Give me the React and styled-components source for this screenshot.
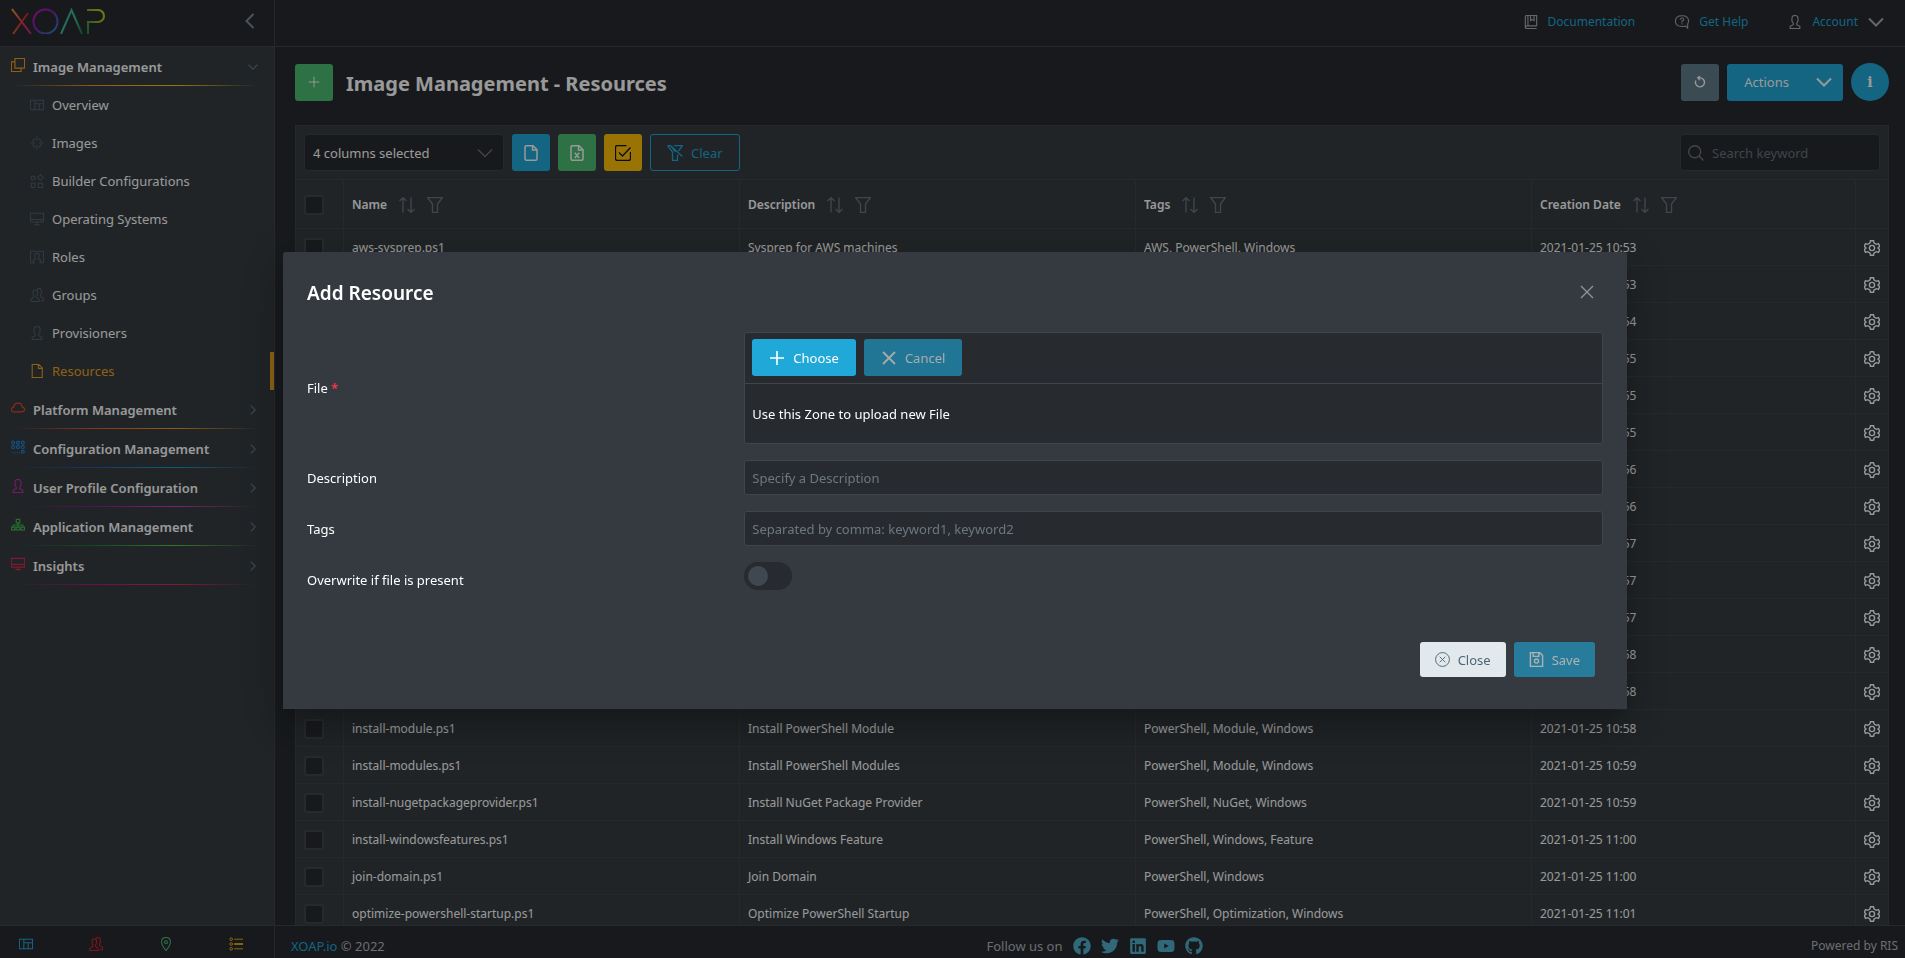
import styled, { createGlobalStyle } from "styled-components";
import { FaFacebook, FaGithub, FaLinkedin, FaTwitter, FaYoutube } from "react-icons/fa";

const colors = {
    page: "#272b30",
    panel: "#363c41",
    dialog: "#343a40",
    line: "#3f454a",
    blue: "#20a8d8",
    green: "#4dbd74",
    yellow: "#ffc107",
    muted: "#6b747c",
};

/* Drawings on a 16 unit grid, one unit stroke */
const drawings = {
    layers: <path d="M4.5.5h11v11h-11zM4.5 4.5h-4v11h11v-4" />,
    overview: <path d="M.5 2.5h15v11H.5zM5.5 2.5v11M5.5 6.5h10M10.5 6.5v7" />,
    target: (
        <path d="M8 .5v5M8 10.5v5M.5 8h5M10.5 8h5M3.5 6.5v-1l2-2h1M9.5 3.5h1l2 2v1M12.5 9.5v1l-2 2h-1M6.5 12.5h-1l-2-2v-1" />
    ),
    blocks: <path d="M1.5 2.5h4v4h-4zM1.5 10.5h4v5h-4zM9.5 10.5h5v5h-5zM12 .8l3.2 3.2L12 7.2 8.8 4z" />,
    monitor: <path d="M.5 1.5h15v10H.5zM.5 8.5h15M12 10h1M8 11.5v3M5 14.5h6" />,
    role: <path d="M3.5 14.5h-3v-13h15v13h-3M3.5 14.5l.5-3 2.5-1.5L5.5 8V6q0-2.5 2.5-2.5T10.5 6v2l-1 2 2.5 1.5.5 3M2.5 14.5h3M10.5 14.5h3" />,
    group: (
        <path d="M1 15.5h9.5V13l-3-2.500V9l1-2V4.500Q8.500 2 6 2T3.500 4.500V7l1 2v1.500L1 13zM8 1.500Q9 .5 10.500.5 13 .5 13 3.500V6l-1 2v1.500l3.500 2.500v2.500H12" />
    ),
    user: <path d="M2.500 15.500V13L6 11V9.500L4.500 7V4Q4.500.5 8 .5T11.500 4v3L10 9.500V11l3.500 2v2.500z" />,
    page: <path d="M2.500.5h7.500L14 4.500v11H2.500zM9.500.5V5H14" />,
    file: <path d="M3.500.7H10L14 4.700v9.100q0 1.500-1.500 1.500h-9Q2 15.300 2 13.800V2.200Q2 .7 3.500.7zM9.500.7V5H14" />,
    excel: (
        <path d="M3.500.7H10L14 4.700v9.100q0 1.500-1.500 1.500h-9Q2 15.300 2 13.800V2.200Q2 .7 3.500.7zM9.500.7V5H14M5.800 7.800l4.400 5.200M10.200 7.800L5.800 13" />
    ),
    cloud: <path d="M3.500 12.500Q.5 12.500.5 9.700.5 7.300 3.200 7 3.500 2.500 8 2.500T12.800 7Q15.500 7.300 15.500 9.700t-3 2.800z" />,
    grid: (
        <>
            <path d="M1 14.500h1M4 14.500h1M7 14.500h1M9.500 14.500h1" />
            {[2.5, 8, 13.5].map((x) => [3, 8].map((y) => <circle key={`${x}-${y}`} cx={x} cy={y} r="1.700" />))}
            <circle cx="13.500" cy="13.500" r="1.700" />
        </>
    ),
    tree: <path d="M6 1.500h4v4H6zM.5 10.500h4v3h-4zM6 10.500h4v3H6zM11.500 10.500h4v3h-4zM8 5.500v5M2.500 10.500V8h11v2.500" />,
    pin: (
        <>
            <path d="M8 15.500Q3 9.500 3 5.700 3 .5 8 .5t5 5.200Q13 9.500 8 15.500z" />
            <circle cx="8" cy="6" r="1.700" />
        </>
    ),
    list: (
        <>
            <path d="M6 2.500h10M6 7.500h10M6 8.500h10M6 13.500h10" />
            <circle cx="2.500" cy="2.500" r="1.500" />
            <circle cx="2.500" cy="8" r="1.500" />
            <circle cx="2.500" cy="13.500" r="1.500" />
        </>
    ),
    book: <path d="M14.500 12.500H3.500q-2 0-2 1.500t2 1.500h11M1.500 14V2.500q0-2 2-2h11v12M4.500.5v12M7.500.5v6l2-1.500 2 1.500v-6" />,
    help: (
        <path d="M12 12.500l2.500 2.500V10Q15.500 8.500 15.500 7 15.500.8 8 .8T.5 7 8 13.200q1.500 0 4-.7zM6 5.500q0-2 2-2t2 1.700Q10 6.500 8 7v1.500M8 9.500v1.300" />
    ),
    reload: <path d="M2.500 6a6 6 0 1 0 5.500-3.500H4.500M8 0L5 2.500l3 3" />,
    search: (
        <>
            <circle cx="6.700" cy="6.700" r="6" />
            <path d="M11 11l4.500 4.500" />
        </>
    ),
    check: <path d="M11.500.5h-9q-2 0-2 2v11q0 2 2 2h11q2 0 2-2V7M4 7.500L7.500 11l8-8.500" />,
    sort: <path d="M4 15.500V1M.5 4L4 .7 7.500 4M12 .5V15M8.500 12l3.500 3.300 3.500-3.300" />,
    filter: <path d="M.5.5h15L10.500 7v8.500h-5V7z" />,
    filterOff: <path d="M7 .6h8.400L11.500 6M.6.6L5.500 7v8.400h5V9.500M.6.6h3L15.400 11.500M3.600.6L8.500 7" />,
    gear: (
        <>
            <path d="M6.500.8h3l.6 2.200 2.300 1.300 2.100-.6 1.200 2.500L14 8l1.700 1.800-1.200 2.500-2.100-.6-2.300 1.300-.6 2.200h-3l-.6-2.200-2.300-1.300-2.100.6L.3 9.800 2 8 .3 6.200l1.200-2.500 2.100.6L5.900 3z" />
            <circle cx="8" cy="8" r="2.600" />
        </>
    ),
    plus: <path d="M8 1v14M1 8h14" />,
    cross: <path d="M2 2l12 12M14 2L2 14" />,
    crossCircle: (
        <>
            <circle cx="8" cy="8" r="7.400" />
            <path d="M5 5l6 6M11 5l-6 6" />
        </>
    ),
    save: (
        <>
            <path d="M1.500.7h10l3 3v11.600h-13zM4.500.7v4h6v-4" />
            <circle cx="8" cy="9.700" r="2.200" />
        </>
    ),
    chevronDown: <path d="M1 4.500l7 7 7-7" />,
    chevronRight: <path d="M4.500 1l7 7-7 7" />,
    chevronLeft: <path d="M11.500 1l-7 7 7 7" />,
};

const Icon = ({ name, size = 14, weight = 1 }) => (
    <Drawing
        viewBox="0 0 16 16"
        width={size}
        height={size}
        strokeWidth={weight}
        aria-hidden="true"
    >
        {drawings[name]}
    </Drawing>
);

const menu = [
    {
        title: "Image Management",
        icon: "layers",
        color: "#f39a1f",
        line: ["#f39a1f", "#f5cc1b"],
        items: [
            ["Overview", "overview"],
            ["Images", "target"],
            ["Builder Configurations", "blocks"],
            ["Operating Systems", "monitor"],
            ["Roles", "role"],
            ["Groups", "group"],
            ["Provisioners", "user"],
            ["Resources", "page"],
        ],
    },
    { title: "Platform Management", icon: "cloud", color: "#e8472b", line: ["#e8572b", "#f39a1f"] },
    { title: "Configuration Management", icon: "grid", color: "#1f8be0", line: ["#2b57b5", "#1c9ad6"] },
    { title: "User Profile Configuration", icon: "user", color: "#c42bb8", line: ["#8a1f8f", "#d13bb4"] },
    { title: "Application Management", icon: "tree", color: "#43b649", line: ["#23793a", "#5fc34a"] },
    { title: "Insights", icon: "monitor", color: "#d8284f", line: ["#b01d7c", "#e02b50"] },
];

const rows = [
    ["aws-sysprep.ps1", "Sysprep for AWS machines", "AWS, PowerShell, Windows", "10:53"],
    ["azure-sysprep.ps1", "Sysprep for Azure machines", "Azure, PowerShell", "10:53"],
    ["cleanup.ps1", "Cleanup", "PowerShell, Windows", "10:54"],
    ["configure-winrm.ps1", "Configure WinRM", "PowerShell, Windows", "10:55"],
    ["debloat.ps1", "Debloat Windows", "PowerShell, Windows", "10:55"],
    ["defrag.ps1", "Defrag Disk", "PowerShell, Windows", "10:55"],
    ["disable-uac.ps1", "Disable UAC", "PowerShell, Windows", "10:56"],
    ["enable-rdp.ps1", "Enable RDP", "PowerShell, Windows", "10:56"],
    ["enable-smb.ps1", "Enable SMB", "PowerShell, Windows", "10:57"],
    ["import-gpo.ps1", "Import GPO", "PowerShell, Windows", "10:57"],
    ["install-agent.ps1", "Install Agent", "PowerShell, Windows", "10:57"],
    ["install-choco.ps1", "Install Chocolatey", "PowerShell, Windows", "10:58"],
    ["install-dsc.ps1", "Install DSC", "PowerShell, Windows", "10:58"],
    ["install-module.ps1", "Install PowerShell Module", "PowerShell, Module, Windows", "10:58"],
    ["install-modules.ps1", "Install PowerShell Modules", "PowerShell, Module, Windows", "10:59"],
    ["install-nugetpackageprovider.ps1", "Install NuGet Package Provider", "PowerShell, NuGet, Windows", "10:59"],
    ["install-windowsfeatures.ps1", "Install Windows Feature", "PowerShell, Windows, Feature", "11:00"],
    ["join-domain.ps1", "Join Domain", "PowerShell, Windows", "11:00"],
    ["optimize-powershell-startup.ps1", "Optimize PowerShell Startup", "PowerShell, Optimization, Windows", "11:01"],
];

const Logo = () => (
    <svg width="96" height="26" viewBox="0 0 96 26" fill="none" strokeWidth="2" role="img" aria-label="XOAP">
        <defs>
            <linearGradient id="x1" x1="0" y1="0" x2="1" y2="1">
                <stop offset="0" stopColor="#f0a02a" />
                <stop offset=".5" stopColor="#e23a4a" />
                <stop offset="1" stopColor="#d11a8c" />
            </linearGradient>
            <linearGradient id="x2" x1="1" y1="0" x2="0" y2="1">
                <stop offset="0" stopColor="#c2263c" />
                <stop offset="1" stopColor="#e0523a" />
            </linearGradient>
            <linearGradient id="o1" x1="0" y1="0" x2="1" y2="1">
                <stop offset="0" stopColor="#d916a8" />
                <stop offset=".4" stopColor="#8a1fb5" />
                <stop offset="1" stopColor="#2389c4" />
            </linearGradient>
            <linearGradient id="a1" x1="0" y1="0" x2="1" y2="1">
                <stop offset="0" stopColor="#2fa9a8" />
                <stop offset=".5" stopColor="#43b98d" />
                <stop offset="1" stopColor="#137a3d" />
            </linearGradient>
            <linearGradient id="p1" x1="0" y1="1" x2="1" y2="0">
                <stop offset="0" stopColor="#1d8a45" />
                <stop offset="1" stopColor="#d3d319" />
            </linearGradient>
        </defs>
        <line x1="17" y1="5" x2="2" y2="26" stroke="url(#x2)" />
        <line x1="1" y1="1" x2="20" y2="26" stroke="url(#x1)" />
        <circle cx="34.500" cy="13.500" r="12" stroke="url(#o1)" />
        <polyline points="50,26 60.500,2 71,26" stroke="url(#a1)" />
        <path d="M76 2h11a6 6 0 0 1 0 12H77v12" stroke="url(#p1)" />
    </svg>
);

const columns = ["Name", "Description", "Tags", "Creation Date"];

const App = () => (
    <>
        <GlobalStyle />
        <Layout>
            <Sidebar>
                <Brand>
                    <Logo />
                    <GhostButton aria-label="Collapse menu">
                        <Icon name="chevronLeft" size={16} weight={2} />
                    </GhostButton>
                </Brand>
                <Menu>
                    {menu.map((group) => (
                        <div key={group.title}>
                            <MenuGroup $line={group.line}>
                                <IconBox $color={group.color}>
                                    <Icon name={group.icon} weight={1.3} />
                                </IconBox>
                                <span>{group.title}</span>
                                <Icon name={group.items ? "chevronDown" : "chevronRight"} size={10} weight={2} />
                            </MenuGroup>
                            {group.items?.map(([label, icon]) => (
                                <MenuItem key={label} href="#" $active={label === "Resources"}>
                                    <Icon name={icon} weight={1.2} />
                                    <span>{label}</span>
                                </MenuItem>
                            ))}
                        </div>
                    ))}
                </Menu>
                <Shortcuts>
                    <GhostButton $color={colors.blue} aria-label="Overview">
                        <Icon name="overview" weight={1.2} />
                    </GhostButton>
                    <GhostButton $color="#dc1f26" aria-label="Groups">
                        <Icon name="group" weight={1.2} />
                    </GhostButton>
                    <GhostButton $color={colors.green} aria-label="Locations">
                        <Icon name="pin" weight={1.2} />
                    </GhostButton>
                    <GhostButton $color={colors.yellow} aria-label="Tasks">
                        <Icon name="list" />
                    </GhostButton>
                </Shortcuts>
            </Sidebar>

            <Main>
                <TopBar>
                    <TopLink href="#">
                        <Icon name="book" weight={1.3} />
                        Documentation
                    </TopLink>
                    <TopLink href="#">
                        <Icon name="help" weight={1.2} />
                        Get Help
                    </TopLink>
                    <TopLink href="#">
                        <Icon name="user" weight={1.3} />
                        Account
                        <Icon name="chevronDown" size={16} weight={2} />
                    </TopLink>
                </TopBar>

                <Content>
                    <PageHead>
                        <Button $square $bg={colors.green} aria-label="Add resource">
                            <Icon name="plus" size={12} weight={1.3} />
                        </Button>
                        <h1>Image Management - Resources</h1>
                        <Button $square $bg="#637d8b" aria-label="Reload">
                            <Icon name="reload" size={12} weight={1.8} />
                        </Button>
                        <Button $wide $bg={colors.blue}>
                            Actions
                            <Icon name="chevronDown" size={16} weight={2} />
                        </Button>
                        <Button $square $round $bg={colors.blue} aria-label="Information">
                            <InfoMark>i</InfoMark>
                        </Button>
                    </PageHead>

                    <Card>
                        <Toolbar>
                            <Field>
                                <select aria-label="Columns">
                                    <option>4 columns selected</option>
                                </select>
                                <Icon name="chevronDown" size={16} weight={1.4} />
                            </Field>
                            <Button $square $bg={colors.blue} aria-label="Export CSV">
                                <Icon name="file" size={16} weight={1.5} />
                            </Button>
                            <Button $square $bg={colors.green} aria-label="Export Excel">
                                <Icon name="excel" size={16} weight={1.5} />
                            </Button>
                            <Button $square $bg={colors.yellow} $fg="#151515" aria-label="Export selection">
                                <Icon name="check" size={16} weight={1.3} />
                            </Button>
                            <Button $outline>
                                <Icon name="filterOff" size={16} weight={1.3} />
                                Clear
                            </Button>
                            <Field $end>
                                <Icon name="search" size={16} weight={1.4} />
                                <input type="text" placeholder="Search keyword" aria-label="Search keyword" />
                            </Field>
                        </Toolbar>
                        <Table>
                            <colgroup>
                                <col width="48" />
                                <col width="396" />
                                <col width="396" />
                                <col width="396" />
                                <col width="324" />
                                <col width="32" />
                            </colgroup>
                            <thead>
                                <tr>
                                    <th>
                                        <input type="checkbox" aria-label="Select all" />
                                    </th>
                                    {columns.map((column) => (
                                        <th key={column}>
                                            <HeadCell>
                                                {column}
                                                <Icon name="sort" size={16} weight={1.4} />
                                                <Icon name="filter" size={16} weight={1.4} />
                                            </HeadCell>
                                        </th>
                                    ))}
                                    <th aria-label="Options" />
                                </tr>
                            </thead>
                            <tbody>
                                {rows.map(([name, description, tags, time]) => (
                                    <tr key={name}>
                                        <td>
                                            <input type="checkbox" aria-label={`Select ${name}`} />
                                        </td>
                                        <td>{name}</td>
                                        <td>{description}</td>
                                        <td>{tags}</td>
                                        <td>2021-01-25 {time}</td>
                                        <td>
                                            <GhostButton $color="#fff" aria-label={`Options for ${name}`}>
                                                <Icon name="gear" size={16} weight={1.4} />
                                            </GhostButton>
                                        </td>
                                    </tr>
                                ))}
                            </tbody>
                        </Table>
                    </Card>
                </Content>

                <Footer>
                    <span>
                        <a href="#">XOAP.io</a> © 2022
                    </span>
                    <Social>
                        Follow us on
                        <a href="#" aria-label="Facebook">
                            <FaFacebook />
                        </a>
                        <a href="#" aria-label="Twitter">
                            <FaTwitter />
                        </a>
                        <a href="#" aria-label="LinkedIn">
                            <FaLinkedin />
                        </a>
                        <a href="#" aria-label="YouTube">
                            <FaYoutube />
                        </a>
                        <a href="#" aria-label="GitHub">
                            <FaGithub />
                        </a>
                    </Social>
                    <Credit>Powered by RIS</Credit>
                </Footer>
            </Main>
        </Layout>

        <Overlay>
            <Dialog role="dialog" aria-labelledby="dialog-title">
                <DialogHead>
                    <h2 id="dialog-title">Add Resource</h2>
                    <GhostButton $color="#8a949c" aria-label="Close dialog">
                        <Icon name="cross" size={16} weight={1.4} />
                    </GhostButton>
                </DialogHead>
                <Form>
                    <FormRow>
                        <label htmlFor="choose">
                            File <Required>*</Required>
                        </label>
                        <Upload>
                            <UploadBar>
                                <Button id="choose" type="button" $bg={colors.blue}>
                                    <Icon name="plus" size={16} weight={1.6} />
                                    Choose
                                </Button>
                                <Button type="button" $bg={colors.blue} disabled>
                                    <Icon name="cross" size={16} weight={1.8} />
                                    Cancel
                                </Button>
                            </UploadBar>
                            <DropZone>Use this Zone to upload new File</DropZone>
                        </Upload>
                    </FormRow>
                    <FormRow>
                        <label htmlFor="description">Description</label>
                        <TextInput id="description" type="text" placeholder="Specify a Description" />
                    </FormRow>
                    <FormRow>
                        <label htmlFor="tags">Tags</label>
                        <TextInput id="tags" type="text" placeholder="Separated by comma: keyword1, keyword2" />
                    </FormRow>
                    <FormRow>
                        <label htmlFor="overwrite">Overwrite if file is present</label>
                        <Switch id="overwrite" type="checkbox" role="switch" />
                    </FormRow>
                </Form>
                <DialogActions>
                    <Button $small $bg="#e1e9ed" $fg="#4f6475">
                        <Icon name="crossCircle" size={15} />
                        Close
                    </Button>
                    <Button $small $bg={colors.blue} disabled>
                        <Icon name="save" size={15} weight={1.5} />
                        Save
                    </Button>
                </DialogActions>
            </Dialog>
        </Overlay>
    </>
);

const GlobalStyle = createGlobalStyle`
    * {
        box-sizing: border-box;
    }

    body {
        margin: 0;
        background: ${colors.page};
        color: #fff;
        font: 13px/20px "Noto Sans", "Open Sans", sans-serif;
    }

    button, input, select {
        font: inherit;
        color: inherit;
    }

    a {
        color: ${colors.blue};
        text-decoration: none;
    }

    h1, h2 {
        margin: 0;
    }
`;

const Drawing = styled.svg`
    display: block;
    flex: none;
    fill: none;
    stroke: currentColor;
`;

const Layout = styled.div`
    display: flex;
    height: 100vh;
    overflow: hidden;
`;

const Sidebar = styled.aside`
    display: flex;
    flex-direction: column;
    flex: none;
    width: 275px;
    background: ${colors.panel};
    border-right: 1px solid ${colors.line};
`;

const Brand = styled.div`
    display: flex;
    align-items: center;
    justify-content: space-between;
    height: 47px;
    padding: 0 16px 4px 11px;
    background: ${colors.page};
    border-bottom: 1px solid ${colors.line};
`;

const GhostButton = styled.button`
    display: inline-flex;
    padding: 0;
    border: 0;
    background: none;
    color: ${({ $color }) => $color || "#7b8b98"};
`;

const Menu = styled.nav`
    flex: 1;
`;

const MenuGroup = styled.div`
    display: flex;
    align-items: center;
    gap: 8px;
    height: 39px;
    padding: 0 16px 0 11px;
    color: #5f7586;
    background: linear-gradient(90deg, transparent, ${({ $line }) => $line.join(", ")}, transparent) 12px bottom /
        calc(100% - 28px) 1px no-repeat;

    > span:nth-child(2) {
        flex: 1;
        color: #fff;
        font-weight: 600;
    }
`;

const IconBox = styled.span`
    padding-bottom: 4px;
    color: ${({ $color }) => $color};
`;

const MenuItem = styled.a`
    display: flex;
    align-items: center;
    gap: 8px;
    height: 38px;
    padding-left: 30px;
    color: ${({ $active }) => ($active ? "#e8a422" : "#4f6272")};
    border-right: 4px solid ${({ $active }) => ($active ? "#e8a422" : "transparent")};

    span {
        color: ${({ $active }) => ($active ? "#e8a422" : "#fff")};
    }
`;

const Shortcuts = styled.div`
    display: flex;
    align-items: center;
    justify-content: space-between;
    height: 33px;
    padding: 4px 31px 0 19px;
    background: ${colors.page};
    border-top: 1px solid ${colors.line};
`;

const Main = styled.div`
    display: flex;
    flex-direction: column;
    flex: 1;
    min-width: 0;
`;

const TopBar = styled.header`
    display: flex;
    flex: none;
    align-items: center;
    justify-content: flex-end;
    gap: 40px;
    height: 47px;
    padding: 0 21px 2px;
    border-bottom: 1px solid ${colors.line};
    font-size: 12px;
`;

const TopLink = styled.a`
    display: flex;
    align-items: center;
    gap: 10px;

    svg {
        color: #aaa;
    }
`;

const Content = styled.main`
    flex: 1;
    min-height: 0;
    padding: 16px 16px 0 20px;
    overflow: hidden;
`;

const PageHead = styled.div`
    display: flex;
    align-items: center;
    gap: 8px;
    margin-bottom: 24px;

    h1 {
        flex: 1;
        padding: 4px 0 0 5px;
        font-size: 20px;
        line-height: 28px;
        font-weight: 700;
    }
`;

const Button = styled.button`
    display: inline-flex;
    align-items: center;
    justify-content: center;
    gap: ${({ $wide }) => ($wide ? "27px" : "8px")};
    width: ${({ $square }) => ($square ? "38px" : "auto")};
    height: ${({ $small, $round }) => ($small ? "35px" : $round ? "38px" : "37px")};
    padding: ${({ $square, $small, $wide }) => ($square ? "0" : $small ? "0 14px" : $wide ? "0 10px 0 16px" : "0 16px")};
    border: 1px solid ${({ $outline }) => ($outline ? colors.blue : "transparent")};
    border-radius: ${({ $round }) => ($round ? "50%" : "3px")};
    background: ${({ $bg }) => $bg || "transparent"};
    color: ${({ $fg, $outline }) => $fg || ($outline ? colors.blue : "#fff")};
    white-space: nowrap;

    &:disabled {
        opacity: 0.6;
    }
`;

const InfoMark = styled.b`
    font-family: "DejaVu Serif", serif;
    font-size: 14px;
`;

const Card = styled.section`
    background: ${colors.panel};
    border: 1px solid ${colors.line};
`;

const Toolbar = styled.div`
    display: flex;
    align-items: center;
    gap: 8px;
    height: 54px;
    padding: 0 8px;
    border-bottom: 1px solid ${colors.line};
`;

const Field = styled.div`
    display: flex;
    align-items: center;
    gap: 8px;
    width: 200px;
    height: 37px;
    padding: 0 ${({ $end }) => ($end ? "7px" : "10px 0 8px")};
    margin-left: ${({ $end }) => ($end ? "auto" : "0")};
    background: ${colors.page};
    border: 1px solid ${colors.line};
    border-radius: 3px;
    color: ${colors.muted};

    input,
    select {
        flex: 1;
        min-width: 0;
        padding: 0;
        border: 0;
        background: none;
        appearance: none;
        color: #fff;
    }

    input::placeholder {
        color: ${colors.muted};
    }
`;

const Table = styled.table`
    width: 100%;
    table-layout: fixed;
    border-collapse: separate;
    border-spacing: 0;
    font-size: 12px;

    th,
    td {
        height: 37px;
        padding: 1px 8px 0;
        border-bottom: 1px solid ${colors.line};
        border-right: 1px solid ${colors.line};
        text-align: left;
        white-space: nowrap;
    }

    th {
        height: 49px;
        font-weight: 600;
    }

    th:last-child,
    td:last-child {
        padding: 0 8px;
        border-right: 0;
    }

    td button {
        vertical-align: middle;
    }

    input {
        display: block;
        width: 20px;
        height: 20px;
        margin: 0;
        appearance: none;
        background: ${colors.page};
        border: 2px solid #40464c;
        border-radius: 3px;
    }
`;

const HeadCell = styled.div`
    display: flex;
    align-items: center;
    gap: 12px;

    svg {
        color: ${colors.muted};
    }
`;

const Footer = styled.footer`
    display: grid;
    flex: none;
    grid-template-columns: 1fr auto 1fr;
    align-items: center;
    height: 33px;
    padding: 8px 7px 0 16px;
    border-top: 1px solid ${colors.line};
    color: #b4b8bc;
`;

const Credit = styled.span`
    font-size: 12px;
    text-align: right;
`;

const Social = styled.div`
    display: flex;
    align-items: center;
    gap: 10px;

    a {
        display: flex;
        font-size: 18px;
        color: #4fb0cc;
    }
`;

const Overlay = styled.div`
    position: fixed;
    inset: 0;
    display: flex;
    align-items: center;
    padding: 3px 278px 0 283px;
    background: rgba(0, 0, 0, 0.4);
`;

const Dialog = styled.section`
    flex: 1;
    background: ${colors.dialog};
    border-radius: 3px 3px 0 0;
    box-shadow:
        0 11px 15px -7px rgba(0, 0, 0, 0.2),
        0 24px 38px 3px rgba(0, 0, 0, 0.14),
        0 9px 46px 8px rgba(0, 0, 0, 0.12);
`;

const DialogHead = styled.div`
    display: flex;
    align-items: center;
    justify-content: space-between;
    height: 80px;
    padding: 0 32px 0 24px;

    h2 {
        padding-top: 2px;
        font-size: 19px;
        line-height: 24px;
        font-weight: 600;
    }
`;

const Form = styled.form`
    display: grid;
    gap: 16px;
    padding: 0 24px;
`;

const FormRow = styled.div`
    display: grid;
    grid-template-columns: 1fr 2fr;
    gap: 8px;
    align-items: center;
    min-height: 35px;
`;

const Required = styled.span`
    color: #f0354b;
    font-weight: 700;
`;

const Upload = styled.div`
    background: ${colors.page};
    border: 1px solid ${colors.line};
    border-radius: 3px;
`;

const UploadBar = styled.div`
    display: flex;
    gap: 8px;
    padding: 6px 7px 7px;
    border-bottom: 1px solid ${colors.line};
`;

const DropZone = styled.div`
    padding: 20px 7px 19px;
`;

const TextInput = styled.input`
    width: 100%;
    height: 35px;
    padding: 0 7px;
    background: ${colors.page};
    border: 1px solid ${colors.line};
    border-radius: 3px;

    &::placeholder {
        color: #6e777f;
    }
`;

const Switch = styled.input`
    display: flex;
    align-self: start;
    align-items: center;
    width: 48px;
    height: 28px;
    margin: 0;
    padding: 0 4px;
    appearance: none;
    background: ${colors.page};
    border-radius: 14px;

    &::before {
        content: "";
        width: 20px;
        height: 20px;
        border-radius: 50%;
        background: #3f4850;
    }
`;

const DialogActions = styled.div`
    display: flex;
    justify-content: flex-end;
    gap: 8px;
    padding: 45px 32px 32px;
`;

export default App;
